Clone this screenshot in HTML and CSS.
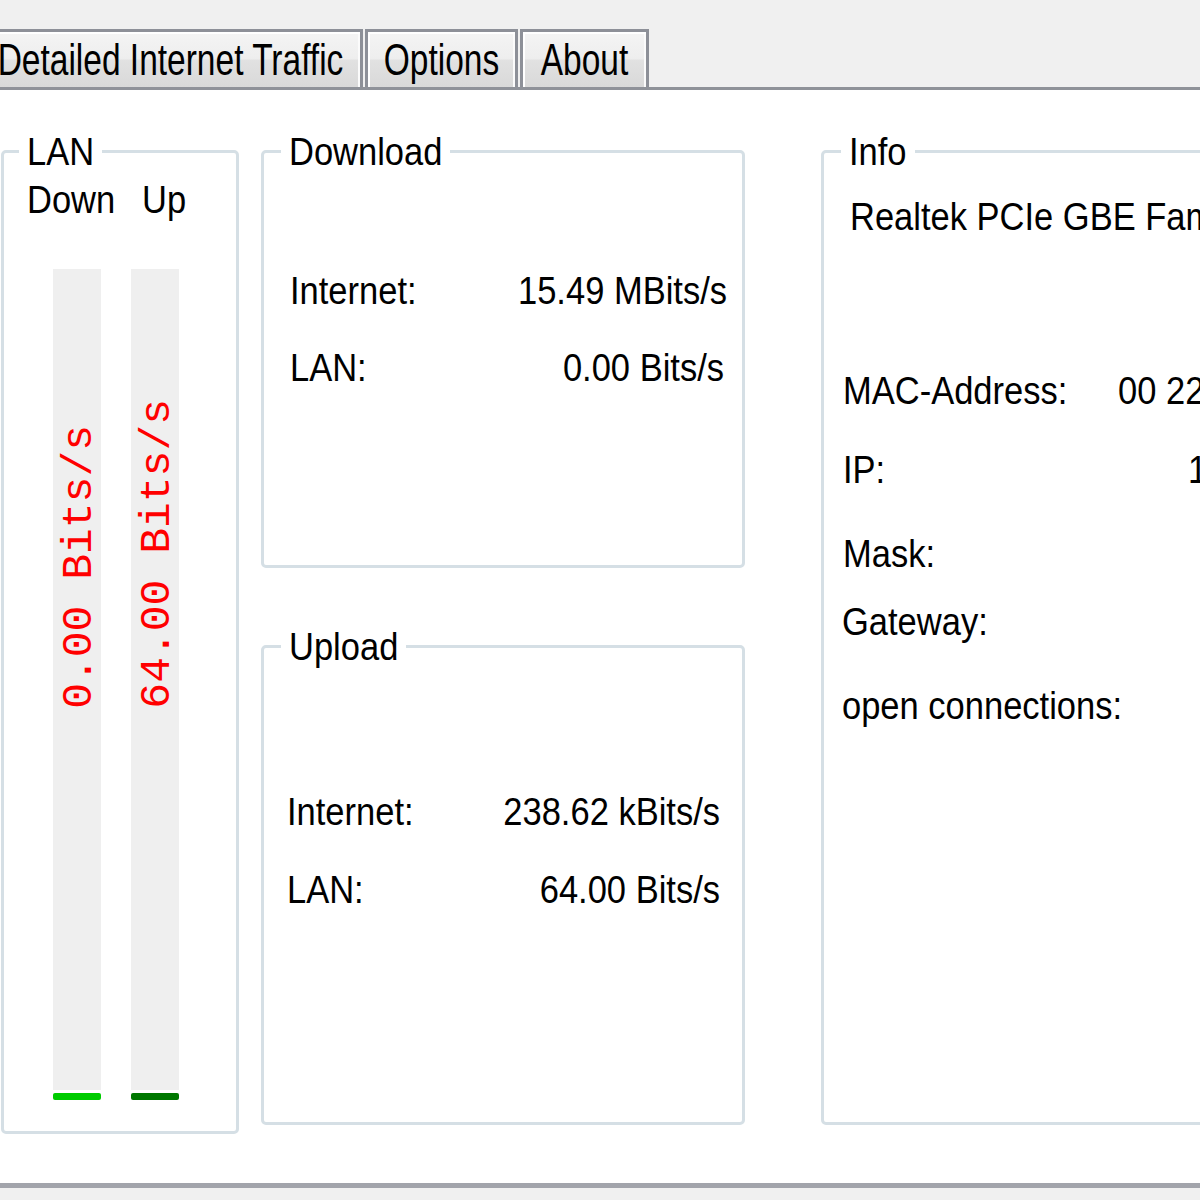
FILE: index.html
```html
<!DOCTYPE html>
<html>
<head>
<meta charset="utf-8">
<link rel="stylesheet" href="styles.css">
</head>
<body>
<div class="app">
  <div class="tabs">
    <div class="tab tab-wide"><span class="tt">Detailed Internet Traffic</span></div>
    <div class="tab tab-opt"><span class="tt">Options</span></div>
    <div class="tab tab-about"><span class="tt">About</span></div>
  </div>
  <div class="panel">
    <fieldset class="group group-lan">
      <legend><span class="t">LAN</span></legend>
      <div class="lan-heads"><span class="t head-down">Down</span><span class="t">Up</span></div>
      <div class="bars">
        <div class="meter">
          <div class="bar"><div class="vwrap"><span class="vlabel">0.00 Bits/s</span></div></div>
          <div class="level level-down"></div>
        </div>
        <div class="meter">
          <div class="bar"><div class="vwrap vwrap-up"><span class="vlabel">64.00 Bits/s</span></div></div>
          <div class="level level-up"></div>
        </div>
      </div>
    </fieldset>

    <div class="col-mid">
      <fieldset class="group group-down">
        <legend><span class="t">Download</span></legend>
        <div class="rows rows-down">
          <div class="row row-first"><span class="t">Internet:</span><span class="t">15.49 MBits/s</span></div>
          <div class="row row-second"><span class="t">LAN:</span><span class="t val-lan">0.00 Bits/s</span></div>
        </div>
      </fieldset>
      <fieldset class="group group-up">
        <legend><span class="t">Upload</span></legend>
        <div class="rows rows-up">
          <div class="row row-first"><span class="t">Internet:</span><span class="t">238.62 kBits/s</span></div>
          <div class="row row-second"><span class="t">LAN:</span><span class="t">64.00 Bits/s</span></div>
        </div>
      </fieldset>
    </div>

    <fieldset class="group group-info">
      <legend><span class="t">Info</span></legend>
      <div class="adapter"><span class="t">Realtek PCIe GBE Family Controller</span></div>
      <div class="info-row info-mac"><span class="t info-label label-mac">MAC-Address:</span><span class="t">00 22 15 8E 5A 3C</span></div>
      <div class="info-row info-ip"><span class="t info-label label-ip">IP:</span><span class="t">192.168.1.20</span></div>
      <div class="info-row info-mask"><span class="t info-label">Mask:</span></div>
      <div class="info-row info-gw"><span class="t info-label">Gateway:</span></div>
      <div class="info-row info-conn"><span class="t info-label">open connections:</span></div>
    </fieldset>
  </div>
</div>
</body>
</html>
```

FILE: styles.css
```css
* { box-sizing: border-box; }

html, body {
  margin: 0;
  padding: 0;
}

body {
  width: 1200px;
  height: 1200px;
  overflow: hidden;
  background: #f0f0f0;
  font-family: "Liberation Sans", Arial, sans-serif;
  color: #000;
}

.app {
  padding-top: 29px;
}

/* ---------- tabs ---------- */
.tabs {
  display: flex;
  gap: 2px;
  margin-left: -22px;
  height: 58px;
}

.tab {
  height: 58px;
  border: 3px solid #8d9098;
  border-bottom: none;
  background: linear-gradient(#f4f4f4 0%, #eeeeee 48%, #e1e1e1 52%, #d9d9d9 100%);
  box-shadow: inset 2px 2px 0 #ffffff, inset -2px 0 0 #fbfbfb;
  display: flex;
  justify-content: center;
  align-items: center;
  padding-top: 3px;
  font-size: 33.5px;
  line-height: 34px;
  white-space: nowrap;
}

.tab-wide { width: 385px; }
.tab-opt { width: 153px; }
.tab-about { width: 129px; }

.tt {
  display: inline-block;
  transform: scaleY(1.3);
}

/* ---------- panel ---------- */
.panel {
  height: 1101px;
  background: #ffffff;
  border-top: 3px solid #8f9299;
  border-bottom: 5px solid #a2a4ab;
  display: flex;
  align-items: flex-start;
  padding: 44px 0 0 1px;
  overflow: hidden;
  font-size: 34.5px;
  line-height: 34px;
}

.t {
  display: inline-block;
  transform: scaleY(1.15);
  white-space: nowrap;
}

.group {
  margin: 0;
  padding: 0;
  min-width: 0;
  border: 3px solid #d5dfe5;
  border-radius: 5px;
  flex: none;
}

.group legend {
  margin-left: 17px;
  padding: 0 8px;
  height: 34px;
  line-height: 34px;
}

/* ---------- LAN ---------- */
.group-lan {
  width: 238px;
  height: 1000px;
}

.group-lan legend {
  margin-left: 15px;
}

.lan-heads {
  display: flex;
  margin-top: 14px;
  padding-left: 23px;
  height: 34px;
}

.head-down { width: 115px; flex: none; }

.bars {
  display: flex;
  gap: 30px;
  margin-top: 53px;
  padding-left: 49px;
}

.meter {
  width: 48px;
}

.bar {
  height: 821px;
  background: #efefef;
  display: flex;
  flex-direction: column;
}

.vwrap {
  height: 440px;
  display: flex;
  flex-direction: column;
  justify-content: flex-end;
  align-items: center;
  padding-left: 4px;
}

.vwrap-up {
  padding-left: 5px;
}

.vlabel {
  writing-mode: vertical-rl;
  transform: rotate(180deg);
  font-family: "Liberation Mono", "Courier New", monospace;
  font-size: 43px;
  line-height: 43px;
  color: #ff0000;
  white-space: nowrap;
}

.level {
  margin-top: 3px;
  height: 7px;
  border-radius: 2px;
}

.level-down { background: #00cc00; }
.level-up { background: #007800; }

/* ---------- Download / Upload ---------- */
.col-mid {
  margin-left: 22px;
  width: 484px;
  flex: none;
  display: flex;
  flex-direction: column;
}

.group-down {
  width: 484px;
  height: 434px;
}

.group-up {
  width: 484px;
  height: 496px;
  margin-top: 61px;
}

.rows-down { padding: 0 15px 0 26px; }
.rows-up { padding: 0 22px 0 23px; }

.row {
  display: flex;
  justify-content: space-between;
  height: 34px;
}

.rows-down .row-first { margin-top: 105px; }
.rows-down .row-second { margin-top: 43px; }
.rows-up .row-first { margin-top: 131px; }
.rows-up .row-second { margin-top: 44px; }

.val-lan { margin-right: 3px; }

/* ---------- Info ---------- */
.group-info {
  margin-left: 76px;
  width: 560px;
  height: 991px;
}

.adapter {
  margin-top: 31px;
  padding-left: 26px;
  height: 34px;
}

.info-row {
  display: flex;
  padding-left: 19px;
  height: 34px;
}

.info-label { flex: none; }
.label-mac { width: 275px; }
.label-ip { width: 345px; }

.info-mac { margin-top: 140px; }
.info-ip { margin-top: 45px; }
.info-mask { margin-top: 50px; }
.info-gw { margin-top: 34px; padding-left: 18px; }
.info-conn { margin-top: 50px; padding-left: 18px; }
```
